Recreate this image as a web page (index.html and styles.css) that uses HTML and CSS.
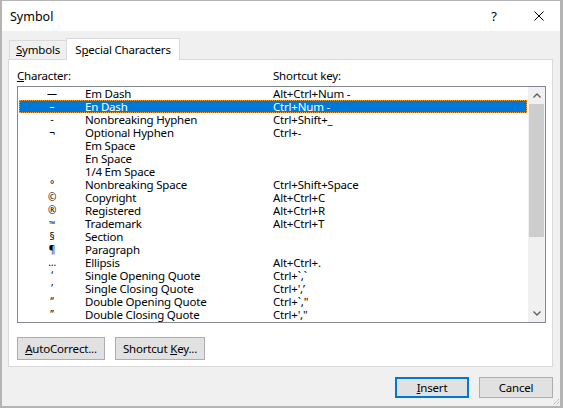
FILE: index.html
```html
<!DOCTYPE html>
<html>
<head>
<meta charset="utf-8">
<link rel="stylesheet" href="styles.css">
</head>
<body>
<div class="window">
  <div class="titlebar">
    <span class="title">Symbol</span>
    <span class="help">?</span>
    <span class="close"><svg width="10" height="10" viewBox="0 0 10 10"><path d="M0.5 0.5 L9.5 9.5 M9.5 0.5 L0.5 9.5" stroke="#000" stroke-width="1" fill="none"/></svg></span>
  </div>
  <div class="body">
    <div class="tabs">
      <div class="tab"><u>S</u>ymbols</div>
      <div class="tab active">S<u>p</u>ecial Characters</div>
    </div>
    <div class="panel">
      <div class="labels">
        <span class="lab-char"><u>C</u>haracter:</span>
        <span class="lab-key">Shortcut key:</span>
      </div>
      <div class="listbox">
        <div class="rows">
          <div class="row"><span class="ch">—</span><span class="nm">Em Dash</span><span class="key">Alt+Ctrl+Num -</span></div>
          <div class="row selected"><span class="ch">–</span><span class="nm">En Dash</span><span class="key">Ctrl+Num -</span></div>
          <div class="row"><span class="ch">-</span><span class="nm">Nonbreaking Hyphen</span><span class="key">Ctrl+Shift+_</span></div>
          <div class="row"><span class="ch">¬</span><span class="nm">Optional Hyphen</span><span class="key">Ctrl+-</span></div>
          <div class="row"><span class="ch"></span><span class="nm">Em Space</span><span class="key"></span></div>
          <div class="row"><span class="ch"></span><span class="nm">En Space</span><span class="key"></span></div>
          <div class="row"><span class="ch"></span><span class="nm">1/4 Em Space</span><span class="key"></span></div>
          <div class="row"><span class="ch">°</span><span class="nm">Nonbreaking Space</span><span class="key">Ctrl+Shift+Space</span></div>
          <div class="row"><span class="ch">©</span><span class="nm">Copyright</span><span class="key">Alt+Ctrl+C</span></div>
          <div class="row"><span class="ch">®</span><span class="nm">Registered</span><span class="key">Alt+Ctrl+R</span></div>
          <div class="row"><span class="ch sm">™</span><span class="nm">Trademark</span><span class="key">Alt+Ctrl+T</span></div>
          <div class="row"><span class="ch">§</span><span class="nm">Section</span><span class="key"></span></div>
          <div class="row"><span class="ch">¶</span><span class="nm">Paragraph</span><span class="key"></span></div>
          <div class="row"><span class="ch">…</span><span class="nm">Ellipsis</span><span class="key">Alt+Ctrl+.</span></div>
          <div class="row"><span class="ch">‘</span><span class="nm">Single Opening Quote</span><span class="key">Ctrl+`,`</span></div>
          <div class="row"><span class="ch">’</span><span class="nm">Single Closing Quote</span><span class="key">Ctrl+',’</span></div>
          <div class="row"><span class="ch">“</span><span class="nm">Double Opening Quote</span><span class="key">Ctrl+`,"</span></div>
          <div class="row"><span class="ch">”</span><span class="nm">Double Closing Quote</span><span class="key">Ctrl+',"</span></div>
        </div>
        <div class="scrollbar">
          <div class="sb-btn"><svg width="8" height="5" viewBox="0 0 8 5"><path d="M0.5 4.5 L4 1 L7.5 4.5" stroke="#606060" stroke-width="1.4" fill="none"/></svg></div>
          <div class="sb-track"><div class="sb-thumb"></div></div>
          <div class="sb-btn"><svg width="8" height="5" viewBox="0 0 8 5"><path d="M0.5 0.5 L4 4 L7.5 0.5" stroke="#606060" stroke-width="1.4" fill="none"/></svg></div>
        </div>
      </div>
      <div class="panel-buttons">
        <button class="btn btn-auto"><u>A</u>utoCorrect...</button>
        <button class="btn btn-short">Shortcut <u>K</u>ey...</button>
      </div>
    </div>
    <div class="dialog-buttons">
      <button class="btn btn-dlg default"><u>I</u>nsert</button>
      <button class="btn btn-dlg">Cancel</button>
    </div>
  </div>
  <svg class="grip" width="8" height="8" viewBox="0 0 8 8"><path d="M7 1 L1 7 M7 4 L4 7" stroke="#a0a0a0" stroke-width="1" stroke-dasharray="1 1" fill="none"/></svg>
</div>
</body>
</html>
```
FILE: styles.css
```css
* { box-sizing: border-box; }
html, body { margin: 0; padding: 0; }
body {
  width: 563px;
  height: 408px;
  font-family: "Noto Sans", "Open Sans", sans-serif;
  font-size: 11.5px;
  letter-spacing: -0.2px;
  color: #000;
  overflow: hidden;
}
u { text-decoration: underline; text-underline-offset: 1px; }
.window {
  position: relative;
  width: 563px;
  height: 408px;
  border-style: solid;
  border-color: #b4b4b4;
  border-width: 1px 3px 2px 2px;
  background: #f0f0f0;
  display: flex;
  flex-direction: column;
}
.titlebar {
  height: 30px;
  background: #fff;
  display: flex;
  align-items: center;
  flex-shrink: 0;
}
.title { margin-left: 8px; font-size: 12.5px; letter-spacing: 0; flex: 1; }
.help { width: 12px; margin-right: 34px; font-size: 13px; text-align: center; }
.close { width: 10px; height: 10px; margin-right: 16px; display: flex; }
.body {
  flex: 1;
  padding: 7px 7px 0 6px;
  display: flex;
  flex-direction: column;
}
.tabs {
  display: flex;
  align-items: flex-end;
  height: 21px;
  padding-left: 1px;
}
.tab {
  height: 19px;
  width: 58px;
  border: 1px solid #d9d9d9;
  border-bottom: none;
  margin-right: -1px;
  text-align: center;
  line-height: 17px;
  background: #f0f0f0;
}
.tab.active {
  height: 22px;
  width: 114px;
  margin-bottom: -1px;
  background: #fff;
  position: relative;
  z-index: 1;
  line-height: 22px;
}
.panel {
  border: 1px solid #d9d9d9;
  background: #fff;
  height: 308px;
  padding: 9px 6px 6px 8px;
  display: flex;
  flex-direction: column;
}
.labels {
  display: flex;
  line-height: 13px;
  height: 13px;
}
.lab-char { width: 256px; }
.listbox {
  margin-top: 4px;
  height: 237px;
  border: 1px solid #828790;
  display: flex;
}
.rows {
  flex: 1;
  padding: 0 1px;
}
.row {
  height: 13px;
  line-height: 13px;
  display: flex;
  white-space: nowrap;
}
.row.selected {
  background: #0078d7;
  color: #fff;
  outline: 1px dotted #f7a13b;
  outline-offset: -1px;
}
.ch { width: 66px; text-align: center; font-size: 10px; }
.ch.sm { font-size: 8px; }
.nm { width: 188px; }
.key { flex: 1; }
.scrollbar {
  width: 17px;
  background: #f0f0f0;
  display: flex;
  flex-direction: column;
}
.sb-btn {
  height: 17px;
  display: flex;
  align-items: center;
  justify-content: center;
}
.sb-track { flex: 1; }
.sb-thumb { height: 133px; background: #cdcdcd; margin: 0 1px; }
.panel-buttons {
  margin-top: 14px;
  display: flex;
  gap: 10px;
}
.btn {
  font-family: inherit;
  font-size: inherit;
  letter-spacing: inherit;
  color: #000;
  height: 23px;
  background: #e1e1e1;
  border: 1px solid #adadad;
  padding: 0;
  margin: 0;
}
.btn-auto { width: 88px; }
.btn-short { width: 90px; }
.dialog-buttons {
  margin-top: 10px;
  display: flex;
  justify-content: flex-end;
  gap: 10px;
}
.btn-dlg { width: 74px; height: 21px; }
.btn.default { border: 2px solid #0078d7; }
.grip { position: absolute; right: 0; bottom: 0; }
```
